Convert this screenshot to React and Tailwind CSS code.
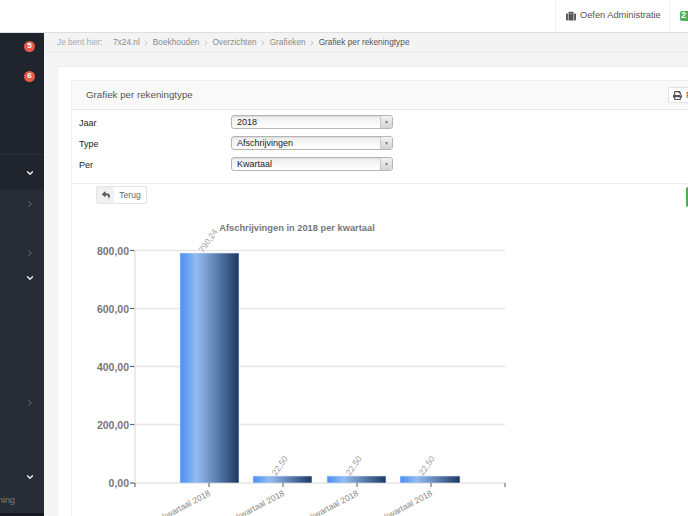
import React from 'react';
import { ChevronDown, ChevronRight } from 'lucide-react';
import { FaSuitcase, FaPrint, FaReply } from 'react-icons/fa';

const grid = [
  { y: 250.5, label: '800,00' },
  { y: 308.5, label: '600,00' },
  { y: 366.5, label: '400,00' },
  { y: 424.5, label: '200,00' },
  { y: 483, label: '0,00' },
];

const bars = [
  { x: 180, w: 59, y: 253, value: '790,24', tick: 209 },
  { x: 253, w: 59, y: 476, value: '22,50', tick: 283 },
  { x: 327, w: 59, y: 476, value: '22,50', tick: 357 },
  { x: 400, w: 60, y: 476, value: '22,50', tick: 431 },
];

const crumbs = ['7x24.nl', 'Boekhouden', 'Overzichten', 'Grafieken'];

const fields = [
  { label: 'Jaar', value: '2018' },
  { label: 'Type', value: 'Afschrijvingen' },
  { label: 'Per', value: 'Kwartaal' },
];

// chart coordinates are page coordinates, shifted by the svg's own origin
const OX = 72;
const OY = 207;

const Chart = () => (
  <svg width="460" height="309" className="block" style={{ fontFamily: 'Liberation Sans, sans-serif' }}>
    <defs>
      <linearGradient id="bar" x1="0" y1="0" x2="1" y2="0">
        <stop offset="0" stopColor="#4a8ff2" />
        <stop offset="0.28" stopColor="#93bbf2" />
        <stop offset="0.6" stopColor="#5f83b3" />
        <stop offset="1" stopColor="#1d3763" />
      </linearGradient>
    </defs>
    <g transform={`translate(${-OX} ${-OY})`}>
      <text x="297" y="231" textAnchor="middle" fontSize="9.3" fontWeight="700" fill="#777">
        Afschrijvingen in 2018 per kwartaal
      </text>
      {grid.map((g) => (
        <g key={g.y}>
          <line x1="135" x2="505" y1={g.y} y2={g.y} stroke="#e6e6e6" strokeWidth="1.4" />
          <line x1="130" x2="135" y1={g.y} y2={g.y} stroke="#666" strokeWidth="1.2" />
          <text x="129" y={g.y + 4} textAnchor="end" fontSize="10.5" fontWeight="700" fill="#777">
            {g.label}
          </text>
        </g>
      ))}
      <line x1="135" x2="135" y1="250" y2="483" stroke="#e2e2e2" strokeWidth="1.4" />
      <line x1="135" x2="135" y1="483" y2="487" stroke="#555" />
      <line x1="505" x2="505" y1="483" y2="487" stroke="#555" />
      {bars.map((b) => (
        <g key={b.tick}>
          <rect x={b.x} y={b.y} width={b.w} height={483 - b.y} fill="url(#bar)" stroke="#dfe6ee" strokeWidth="0.6" />
          <text
            x={b.x + 23}
            y={b.y}
            fontSize="8.5"
            fill="#a0a0a0"
            transform={`rotate(-55 ${b.x + 23} ${b.y})`}
          >
            {b.value}
          </text>
          <line x1={b.tick} x2={b.tick} y1="483" y2="487" stroke="#555" />
          <text
            x={b.tick + 2}
            y="495"
            fontSize="8.5"
            fill="#888"
            textAnchor="end"
            transform={`rotate(-28 ${b.tick + 2} 495)`}
          >
            1e kwartaal 2018
          </text>
        </g>
      ))}
    </g>
  </svg>
);

const SideRow = ({ h, icon, badge, className = '' }) => (
  <div className={`flex items-center justify-end pr-[9px] ${className}`} style={{ height: h }}>
    {icon === 'down' && <ChevronDown size={10} strokeWidth={3} className="text-gray-100" />}
    {icon === 'right' && <ChevronRight size={10} strokeWidth={2.5} className="text-[#626976]" />}
    {badge && (
      <span className="flex h-[11px] w-[11px] items-center justify-center rounded-full bg-[#e8594a] text-[8px] font-bold text-white">
        {badge}
      </span>
    )}
  </div>
);

export default function App() {
  return (
    <div className="flex h-[516px] w-[688px] flex-col overflow-hidden bg-white font-['Liberation_Sans',sans-serif] text-[10px]">
      <header className="flex h-[33px] shrink-0 justify-end border-b border-[#dedede] bg-white">
        <div className="flex w-[115px] items-center gap-[4px] whitespace-nowrap border-x border-[#f0f0f0] pl-[10px] text-[9.25px] text-[#555]">
          <FaSuitcase size={10} className="text-[#555]" />
          Oefen Administratie
        </div>
        <div className="flex w-[18px] items-center pl-[10px]">
          <span className="flex h-[10px] w-[12px] shrink-0 items-center rounded-[2px] bg-[#4cb05a] pl-[1px] text-[9px] font-bold text-white">
            2
          </span>
        </div>
      </header>

      <div className="flex min-h-0 flex-1">
        <aside className="flex w-[44px] shrink-0 flex-col bg-[#272c36]">
          <div className="bg-[#20242d]">
            <SideRow h={26} badge="5" />
            <SideRow h={34} badge="6" />
            <div className="h-[62px] border-b border-[#2b303a]" />
            <SideRow h={35} icon="down" />
          </div>
          <SideRow h={26} icon="right" className="mt-[1px]" />
          <SideRow h={24} />
          <SideRow h={24} icon="right" />
          <SideRow h={26} icon="down" />
          <div className="h-[100px]" />
          <SideRow h={24} icon="right" />
          <div className="h-[50px]" />
          <SideRow h={24} icon="down" />
          <div className="flex h-[24px] w-[15px] items-center justify-end overflow-hidden whitespace-nowrap text-[9px] text-[#7b808a]">
            Rekening
          </div>
          <div className="flex-1 bg-[#171a20]" />
        </aside>

        <main className="min-w-0 flex-1 bg-[#f5f5f5]">
          <div className="flex h-[20px] items-center whitespace-nowrap border-b border-[#ececec] bg-[#f3f3f3] pl-[13px] text-[8.3px] text-[#8b8b8b]">
            <span className="w-[56px] text-[#aaa]">Je bent hier:</span>
            {crumbs.map((c) => (
              <span key={c} className="flex items-center">
                {c}
                <ChevronRight size={8} className="mx-[2.5px] text-[#aaa]" />
              </span>
            ))}
            <span className="text-[#555]">Grafiek per rekeningtype</span>
          </div>

          <div className="ml-[13px] mt-[13px] h-[500px] w-[700px] border-t border-l border-[#eeeeee] bg-white pl-[13px] pt-[13px]">
            <section className="w-[660px] border-l border-t border-[#efefef]">
              <div className="flex h-[29px] items-center justify-between border-b border-[#e6e6e6] bg-[#f9f9f9] pl-[14px] pr-[19px] text-[9.75px] text-[#555]">
                <span className="pt-[1px]">Grafiek per rekeningtype</span>
                <button className="flex h-[16px] w-[44px] items-center gap-[4px] rounded-[2px] border border-[#e2e2e2] bg-white pl-[4px] text-[8.5px] text-[#555]">
                  <FaPrint size={9} />
                  Print
                </button>
              </div>

              <div className="flex h-[74px] flex-col gap-[7px] border-b border-[#eeeeee] pl-[7px] pt-[5px]">
                {fields.map((f) => (
                  <div key={f.label} className="flex h-[14px] items-center">
                    <label className="w-[152px] pt-[3px] text-[9px] text-[#222]">{f.label}</label>
                    <div className="flex h-[14px] w-[162px] overflow-hidden rounded-[3px] border border-[#b5b5b5] bg-gradient-to-b from-[#eeeeee] to-white shadow-[inset_0_1px_1px_rgba(0,0,0,0.08)]">
                      <span className="flex-1 pl-[5px] text-[9px] leading-[13px] text-[#222]">{f.value}</span>
                      <span className="flex w-[12px] items-center justify-center border-l border-[#c9c9c9] bg-gradient-to-b from-[#f2f2f2] to-[#d4d4d4] pt-[2px] text-[5px] text-[#777]">
                        ▼
                      </span>
                    </div>
                  </div>
                ))}
              </div>

              <div className="flex items-start justify-between pl-[24px] pr-[37px] pt-[2px]">
                <button className="flex h-[18px] w-[51px] items-stretch overflow-hidden rounded-[2px] border border-[#e3e3e3] bg-white text-[8.5px] text-[#666]">
                  <span className="flex w-[17px] items-center justify-center bg-[#f0f0f0]">
                    <FaReply size={8} className="text-[#555]" />
                  </span>
                  <span className="flex flex-1 items-center justify-center">Terug</span>
                </button>
                <span className="mt-[1px] h-[20px] w-[8px] rounded-l-[2px] bg-[#4cae4c]" />
              </div>

              <Chart />
            </section>
          </div>
        </main>
      </div>
    </div>
  );
}
